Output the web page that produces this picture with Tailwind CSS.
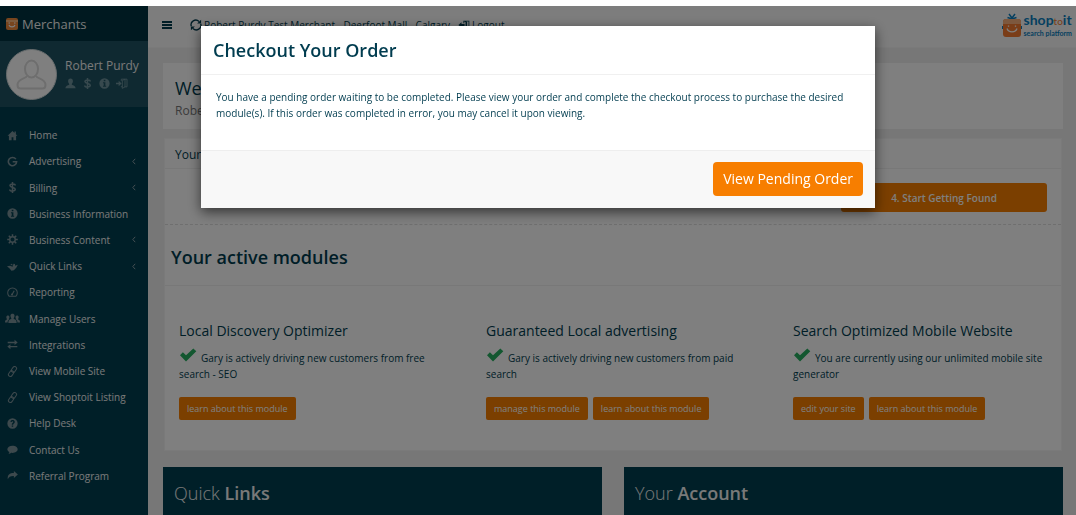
<!DOCTYPE html>
<html lang="en">
<head>
  <meta charset="UTF-8" />
  <meta name="viewport" content="width=device-width, initial-scale=1" />
  <title>Merchants - Shoptoit</title>
  <script src="https://cdn.jsdelivr.net/npm/@tailwindcss/browser@4"></script>
</head>
<body class="min-h-screen bg-white pt-1.5 font-['Open_Sans',sans-serif] text-[10px] leading-4 text-[#003c4f]">

  <!-- Icons -->
  <svg class="hidden">
    <symbol id="i-home" viewBox="0 0 16 16"><path d="M8 1.5 0.8 8.4h2V15h3.9v-4.4h2.6V15h3.9V8.4h2L12.9 6V2h-2v2.2z"/></symbol>
    <symbol id="i-google" viewBox="0 0 16 16"><path d="M12.900 4.600A6 6 0 1 0 14 8.300H8.300" fill="none" stroke="currentColor" stroke-width="2.300"/></symbol>
    <symbol id="i-dollar" viewBox="0 0 16 16"><path d="M12 5C12 2.200 4.300 2 4.300 5.100c0 3.400 7.700 2.200 7.700 5.600 0 3.300-8 3.200-8 .1M8 0v16" fill="none" stroke="currentColor" stroke-width="2.200"/></symbol>
    <symbol id="i-info" viewBox="0 0 16 16"><path fill-rule="evenodd" d="M8 .5a7.500 7.500 0 1 0 0 15 7.500 7.500 0 0 0 0-15zM6.900 2.600h2.400v2.200H6.900zM5.800 6.200h3.500v5h1.100v1.600H5.800v-1.600h1.100V7.800H5.800z"/></symbol>
    <symbol id="i-cog" viewBox="0 0 16 16"><circle cx="8" cy="8" r="4" fill="none" stroke="currentColor" stroke-width="2"/><path d="M8 .3V4M8 12v3.700M.3 8H4M12 8h3.700M2.600 2.600l2.500 2.500M10.900 10.900l2.500 2.500M13.400 2.600l-2.500 2.500M5.100 10.900l-2.500 2.500" stroke="currentColor" stroke-width="2.200"/></symbol>
    <symbol id="i-plane" viewBox="0 0 16 16"><path d="M0 7.500 4.500 7 8 8.200 9.500 4l2 .4.3 2.400 3.900-1.300-2.200 4.300L10 13.500l-3.500.5-2.700-3.200z"/><path d="M5.500 4.500 8 6" stroke="currentColor" stroke-width="1.500"/></symbol>
    <symbol id="i-gauge" viewBox="0 0 16 16"><path d="M3.200 13.500a7 7 0 1 1 9.600 0z" fill="none" stroke="currentColor" stroke-width="1.500"/><path d="M7 11.500 10.500 5.500" stroke="currentColor" stroke-width="1.600"/><circle cx="7.300" cy="10.800" r="1.500"/></symbol>
    <symbol id="i-users" viewBox="0 0 22 16"><path d="M8 3.500C8 .4 14 .4 14 3.500c0 2-.7 3-1.200 3.800v1.500c1.700.7 4.200 1.300 4.200 4.200v1.500H5V13c0-2.900 2.500-3.500 4.200-4.200V7.300C8.700 6.500 8 5.500 8 3.500z"/><path d="M2 6c0-3 4.500-3 4.500 0 0 1.500-.5 2-.8 2.500v1.200c-1.300.7-1.900 1.800-1.900 4.300H0c0-3 .5-3.500 2.800-4.500v-1C2.500 8 2 7.500 2 6zM20 6c0-3-4.500-3-4.500 0 0 1.500.5 2 .8 2.500v1.200c1.300.7 1.900 1.800 1.900 4.300H22c0-3-.5-3.500-2.800-4.500v-1c.3-.5.8-1 .8-2.500z"/></symbol>
    <symbol id="i-swap" viewBox="0 0 16 16"><path d="M1 4h10V1.200L15.500 5 11 8.800V6H1zM15 10H5V7.500L.5 11 5 14.800V12h10z"/></symbol>
    <symbol id="i-link" viewBox="0 0 16 16"><g fill="none" stroke="currentColor" stroke-width="1.500" transform="rotate(-55 8 8)"><rect x="-.2" y="5.200" width="9" height="5.600" rx="2.800"/><rect x="7.200" y="5.200" width="9" height="5.600" rx="2.800"/></g></symbol>
    <symbol id="i-help" viewBox="0 0 16 16"><path fill-rule="evenodd" d="M8 .5a7.500 7.500 0 1 0 0 15 7.500 7.500 0 0 0 0-15zM4.900 5.600C5.300 1.900 11.300 2 11.300 5.700c0 2.200-2.300 2.400-2.300 4H6.900c0-2.700 2.200-2.700 2.200-4 0-1.300-1.900-1.200-2.100.2zM6.900 10.800H9v2H6.900z"/></symbol>
    <symbol id="i-chat" viewBox="0 0 16 16"><path d="M8 2.500c4.200 0 7.500 2.300 7.500 5.200S12.200 13 8 13c-.7 0-1.300 0-2-.2-1 1-2.300 1.700-3.800 1.700.8-.8 1.200-1.700 1.200-2.800C1.600 10.700.5 9.300.5 7.700.5 4.800 3.800 2.500 8 2.500z"/></symbol>
    <symbol id="i-share" viewBox="0 0 16 16"><path d="M10 1.500 15.800 6.500 10 11.500V8.700C5 8.500 2.800 9.500 1.200 13.500.2 7 4 4.300 10 4.300z"/></symbol>
    <symbol id="i-user" viewBox="0 0 16 16"><path d="M4.500 4.500C4.500-.3 11.500-.3 11.500 4.500c0 2-.8 3.200-1.600 4.200v1.200c2.100 1 5.100 1.500 5.600 5.100H.5c.5-3.600 3.500-4.100 5.600-5.100V8.700c-.8-1-1.600-2.200-1.600-4.200z"/></symbol>
    <symbol id="i-login" viewBox="0 0 18 16"><path d="M0 6.800h4V3.800L8.500 8 4 12.200v-3H0z"/><path d="M8 4V1.500h8.500v11.500H13M8 12v1h1.500" fill="none" stroke="currentColor" stroke-width="1.400"/><path d="M9.500 3.500 13.500 1.500V13l-4 2.300z" fill="none" stroke="currentColor" stroke-width="1.400"/></symbol>
    <symbol id="i-logout" viewBox="0 0 18 16"><path d="M10 6.500H5V3.500L0 8l5 4.500v-3h5zM8 1h9.500v12H14v2.500L10.500 13H8v-2h1.500v.8h2V3.500L9.500 2.400V5H8z"/><path d="M12.500 2.300h3.700v9.500H14V3z" fill="#fff"/></symbol>
    <symbol id="i-refresh" viewBox="0 0 16 16"><path d="M1.800 9.800A6.200 6.200 0 0 1 12 3.300M14.200 6.200A6.200 6.200 0 0 1 4 12.700" fill="none" stroke="currentColor" stroke-width="1.800"/><path d="M14.800 1v5H9.500zM1.200 15v-5h5.300z"/></symbol>
    <symbol id="i-check" viewBox="0 0 18 14"><path d="M1 7.200 3.900 4.300 7 7.300 14.300.5 17.300 3.300 7 13.500z"/></symbol>
    <symbol id="i-left" viewBox="0 0 6 10"><path d="M4.800 1 1.200 5l3.600 4" fill="none" stroke="currentColor" stroke-width="1.500"/></symbol>
  </svg>

  <div class="flex min-h-[calc(100vh-6px)]">

    <!-- Sidebar -->
    <aside class="w-[148px] shrink-0 bg-[#003f51] text-[#f2f2f2]">
      <div class="flex h-[35px] items-center gap-1 bg-[#003240] px-1.5 text-[13px]">
        <svg class="size-3" viewBox="0 0 12 12"><rect width="12" height="12" rx="2" fill="#f08a3c"/><path d="M0 3h12" stroke="#ffc48f" stroke-width="1.500"/><path d="M3 7c1 2.500 5 2.500 6 0" fill="none" stroke="#fff" stroke-width="1.200"/><path d="M2.500 5h1.500M8 5h1.500" stroke="#fff"/></svg>
        <span>Merchants</span>
      </div>
      <div class="flex h-[66px] items-center gap-2 bg-[#1e5363] pl-1.5">
        <svg class="size-[51px] shrink-0" viewBox="0 0 51 51"><circle cx="25.500" cy="25.500" r="25" fill="#fff" stroke="#d0d8da"/><g fill="none" stroke="#dcdcdc" stroke-width="2"><ellipse cx="25.500" cy="20" rx="6.500" ry="8.500"/><path d="M21 27c-1 3-9.500 2-9.500 9 0 2 1 3.500 3 3.500h22c2 0 3-1.500 3-3.500 0-7-8.500-6-9.500-9"/></g></svg>
        <div>
          <div class="text-[12px] leading-[18px] whitespace-nowrap">Robert Purdy</div>
          <div class="flex h-4 items-center gap-[6px] text-[#6f929c]">
            <svg class="size-[11px]" fill="currentColor"><use href="#i-user"/></svg>
            <svg class="size-[11px]" fill="currentColor"><use href="#i-dollar"/></svg>
            <svg class="size-[11px]" fill="currentColor"><use href="#i-info"/></svg>
            <svg class="h-[11px] w-3" fill="currentColor"><use href="#i-login"/></svg>
          </div>
        </div>
      </div>
      <ul id="menu" class="mt-[15px] grid h-[367px] auto-rows-fr font-medium"></ul>
    </aside>

    <main class="flex min-w-0 grow flex-col bg-[#efefef]">
      <!-- Top bar -->
      <header class="flex h-[42px] items-start justify-between border-b border-[#f4f4f4] bg-[#fbfbfb]">
        <div class="flex h-[38px] items-center pl-[14px]">
          <button class="flex w-[10px] flex-col gap-px" aria-label="Toggle menu">
            <span class="h-[2px] w-full bg-[#003c4f]"></span>
            <span class="h-[2px] w-full bg-[#003c4f]"></span>
            <span class="h-[2px] w-full bg-[#003c4f]"></span>
          </button>
          <a href="#" class="ml-[18px] flex items-center gap-[2px]">
            <svg class="size-3" fill="currentColor"><use href="#i-refresh"/></svg>
            Robert Purdy Test Merchant - Deerfoot Mall - Calgary
          </a>
          <a href="#" class="ml-2 flex items-center gap-[2px]">
            <svg class="h-[10px] w-3" fill="currentColor"><use href="#i-logout"/></svg>
            Logout
          </a>
        </div>
        <div class="flex items-center gap-[2px] pt-[6px] pr-1 font-[Lato,sans-serif] text-[#0b7fc0]">
          <svg class="h-[25px] w-5" viewBox="0 0 20 25"><path d="M7 1l3 4 3-4M5.500 4.500 10 6l4.500-1.500" fill="none" stroke="#0b7fc0" stroke-width="1.500"/><path d="M0 13h20v3H0z" fill="#0b7fc0"/><rect x="1" y="6" width="18" height="18" rx="3" fill="#f47b30"/><path d="M1 11V9a3 3 0 0 1 3-3h12a3 3 0 0 1 3 3v2z" fill="#fbb07c"/><path d="M5 15.500c1.500 4.500 8.500 4.500 10 0M6.500 12.500v1.200M13.500 12.500v1.200" fill="none" stroke="#fff" stroke-width="1.300"/></svg>
          <div>
            <div class="text-[14px] leading-[15px] font-bold">shop<span class="text-[10px] font-normal text-[#f47b30]">to</span>it</div>
            <div class="text-[7px] leading-[9px] font-bold">search platform</div>
          </div>
        </div>
      </header>

      <div class="flex grow flex-col pt-[15px] pr-[13px] pl-[15px]">
        <!-- Welcome -->
        <section class="h-[66px] bg-white px-3 pt-[13px]">
          <h1 class="text-[18px] leading-6">Welcome</h1>
          <p class="text-[12px] leading-[22px] text-[#777]">Robert Purdy Test Merchant</p>
        </section>

        <!-- Modules -->
        <section class="mx-px mt-[9px] border border-[#f4f4f4] bg-white">
          <h2 class="border-b border-[#f0f0f0] bg-[#fcfcfc] px-[10px] pt-[7px] pb-[5px] text-[12px] leading-[17px]">Your progress</h2>
          <div class="flex justify-end border-b border-dashed border-[#dfdfdf] px-[14px] pt-[14px] pb-3">
            <button class="h-[29px] w-[206px] rounded-[3px] bg-[#f77e00] font-semibold text-white">4. Start Getting Found</button>
          </div>
          <h2 class="border-b border-[#f0f0f0] px-[6px] pt-5 pb-4 text-[18px] leading-6 font-semibold">Your active modules</h2>
          <div class="grid grid-cols-3 gap-x-[53px] px-[14px] pt-[35px] pb-[30px]">
            <article>
              <h3 class="text-[14px] leading-5 font-medium">Local Discovery Optimizer</h3>
              <p class="mt-[7px]"><svg class="mr-1 inline h-[14px] w-[18px] align-baseline text-[#27ae60]" fill="currentColor"><use href="#i-check"/></svg>Gary is actively driving new customers from free search - SEO</p>
              <div class="mt-[15px] flex gap-[5px]">
                <button class="h-[23px] rounded-[2px] bg-[#f77e00] px-2 text-[9px] whitespace-nowrap text-white">learn about this module</button>
              </div>
            </article>
            <article>
              <h3 class="text-[14px] leading-5 font-medium">Guaranteed Local advertising</h3>
              <p class="mt-[7px]"><svg class="mr-1 inline h-[14px] w-[18px] align-baseline text-[#27ae60]" fill="currentColor"><use href="#i-check"/></svg>Gary is actively driving new customers from paid search</p>
              <div class="mt-[15px] flex gap-[5px]">
                <button class="h-[23px] rounded-[2px] bg-[#f77e00] px-2 text-[9px] whitespace-nowrap text-white">manage this module</button>
                <button class="h-[23px] rounded-[2px] bg-[#f77e00] px-2 text-[9px] whitespace-nowrap text-white">learn about this module</button>
              </div>
            </article>
            <article>
              <h3 class="text-[14px] leading-5 font-medium">Search Optimized Mobile Website</h3>
              <p class="mt-[7px]"><svg class="mr-1 inline h-[14px] w-[18px] align-baseline text-[#27ae60]" fill="currentColor"><use href="#i-check"/></svg>You are currently using our unlimited mobile site generator</p>
              <div class="mt-[15px] flex gap-[5px]">
                <button class="h-[23px] rounded-[2px] bg-[#f77e00] px-2 text-[9px] whitespace-nowrap text-white">edit your site</button>
                <button class="h-[23px] rounded-[2px] bg-[#f77e00] px-2 text-[9px] whitespace-nowrap text-white">learn about this module</button>
              </div>
            </article>
          </div>
        </section>

        <div class="mt-4 grid grow grid-cols-2 gap-x-[22px] text-[18px] leading-6 font-light text-[#f2f2f2]">
          <section class="bg-[#003f51] px-[11px] pt-[14px]"><h2>Quick <b class="font-semibold">Links</b></h2></section>
          <section class="bg-[#003f51] px-[11px] pt-[14px]"><h2>Your <b class="font-semibold">Account</b></h2></section>
        </div>
      </div>
    </main>
  </div>

  <!-- Checkout modal -->
  <div class="fixed inset-x-0 top-1.5 bottom-0 flex items-start justify-center bg-black/50 pt-5">
    <div role="dialog" aria-labelledby="modal-title" class="w-full max-w-[674px] bg-white shadow-[0_4px_12px_rgba(0,0,0,0.6)]">
      <div class="border-b border-[#f0f0f0] px-3 pt-3 pb-[11px]">
        <h2 id="modal-title" class="text-[18px] leading-[25px] font-semibold">Checkout Your Order</h2>
      </div>
      <p class="px-[15px] pt-[14px] pb-[29px]">You have a pending order waiting to be completed. Please view your order and complete the checkout process to purchase the desired module(s). If this order was completed in error, you may cancel it upon viewing.</p>
      <div class="flex justify-end border-t border-[#eee] bg-[#f8f8f8] px-3 pt-[11px] pb-3">
        <button class="h-[34px] rounded-[4px] bg-[#f77e00] px-[10px] text-[14px] text-white">View Pending Order</button>
      </div>
    </div>
  </div>

  <script>
    const items = [
      { icon: "home", label: "Home" },
      { icon: "google", label: "Advertising", sub: true },
      { icon: "dollar", label: "Billing", sub: true },
      { icon: "info", label: "Business Information" },
      { icon: "cog", label: "Business Content", sub: true },
      { icon: "plane", label: "Quick Links", sub: true },
      { icon: "gauge", label: "Reporting" },
      { icon: "users", label: "Manage Users" },
      { icon: "swap", label: "Integrations" },
      { icon: "link", label: "View Mobile Site" },
      { icon: "link", label: "View Shoptoit Listing" },
      { icon: "help", label: "Help Desk" },
      { icon: "chat", label: "Contact Us" },
      { icon: "share", label: "Referral Program" }
    ];

    const menu = document.getElementById("menu");
    items.forEach(item => {
      const li = document.createElement("li");
      li.innerHTML = `
        <a href="#" class="flex h-full items-center pr-3 pl-[5px] whitespace-nowrap">
          <svg class="mr-[9px] h-[11px] w-[15px] shrink-0 text-[#7b929a]" fill="currentColor"><use href="#i-${item.icon}"/></svg>
          <span class="grow">${item.label}</span>
          ${item.sub ? '<svg class="h-[7px] w-1 text-[#8a9fa6]"><use href="#i-left"/></svg>' : ''}
        </a>`;
      menu.appendChild(li);
    });
  </script>

</body>
</html>
